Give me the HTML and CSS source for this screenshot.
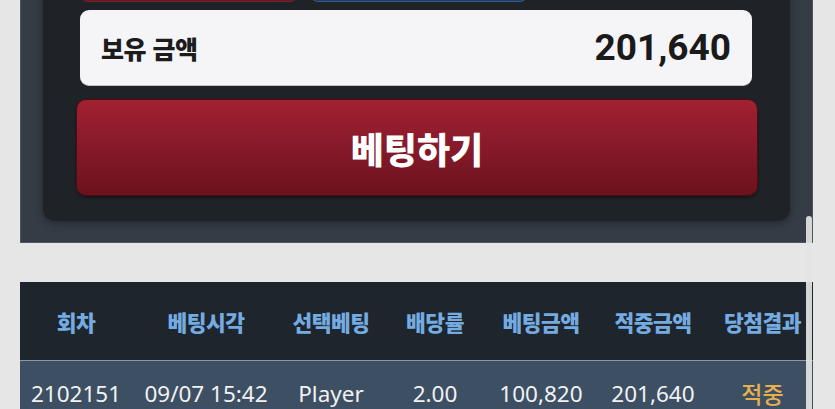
FILE: index.html
```html
<!DOCTYPE html>
<html lang="ko">
<head>
<meta charset="utf-8">
<link rel="stylesheet" href="styles.css">
</head>
<body>
<div class="page">
  <section class="bet-panel">
    <div class="bet-inner">
      <div class="pick-row">
        <div class="pick pick-red"></div>
        <div class="pick pick-blue"></div>
      </div>
      <div class="balance">
        <span class="balance-label">보유 금액</span>
        <span class="balance-value">201,640</span>
      </div>
      <button class="bet-btn">베팅하기</button>
    </div>
  </section>

  <table class="history">
    <colgroup>
      <col class="c1"><col class="c2"><col class="c3"><col class="c4"><col class="c5"><col class="c6"><col class="c7">
    </colgroup>
    <thead>
      <tr>
        <th>회차</th><th>베팅시각</th><th>선택베팅</th><th>배당률</th><th>베팅금액</th><th>적중금액</th><th>당첨결과</th>
      </tr>
    </thead>
    <tbody>
      <tr>
        <td>2102151</td><td>09/07 15:42</td><td>Player</td><td>2.00</td><td>100,820</td><td>201,640</td><td class="win">적중</td>
      </tr>
    </tbody>
  </table>
</div>
<div class="scrollbar"></div>
</body>
</html>
```
FILE: styles.css
```css
html, body {
  margin: 0;
  padding: 0;
  height: 100%;
  overflow: hidden;
}
body {
  background: #e6e6e6;
  font-family: "Noto Sans", "Noto Sans CJK KR", sans-serif;
}
.page {
  padding: 0 22px 0 20px;
}
.bet-panel {
  background: #353c45;
  border: 1px solid #4d5661;
  border-top: none;
  padding: 0 22px 21px 22px;
}
.bet-inner {
  background: #1f2328;
  border-radius: 0 0 12px 12px;
  box-shadow: 0 2px 8px rgba(0, 0, 0, 0.35);
  margin-top: -40px;
  padding: 0 32px 25px 33px;
}
.pick-row {
  display: flex;
  gap: 12px;
  height: 42px;
  padding: 0 4px;
  margin-bottom: 8px;
}
.pick {
  width: 216px;
  border-radius: 0 0 8px 8px;
}
.pick-red {
  background: #5e1a1f;
  border: 1px solid #7b2328;
}
.pick-blue {
  background: #213b5f;
  border: 1px solid #34598a;
}
.balance {
  margin: 0 6px 0 4px;
  height: 76px;
  background: #f5f5f7;
  border-radius: 9px;
  border-bottom: 1px solid #b9c3d3;
  box-sizing: border-box;
  display: flex;
  align-items: center;
  justify-content: space-between;
  padding: 0 21px;
}
.balance-label {
  font-family: "Noto Sans CJK KR", sans-serif;
  font-weight: 900;
  font-size: 25px;
  color: #1c1c1c;
  letter-spacing: -0.5px;
}
.balance-value {
  font-family: Roboto, "Noto Sans", sans-serif;
  font-weight: 700;
  font-size: 37px;
  color: #1a1a1a;
}
.bet-btn {
  display: block;
  width: 100%;
  margin-top: 13px;
  height: 97px;
  border: 1px solid #4a0d14;
  border-radius: 10px;
  background: linear-gradient(to bottom, #a2212f 0%, #86192a 50%, #6c121c 100%);
  color: #ffffff;
  font-family: "Noto Sans CJK KR", sans-serif;
  font-weight: 900;
  font-size: 36px;
  padding: 0;
  box-shadow: 0 2px 3px rgba(0, 0, 0, 0.4);
}
.history {
  width: 793px;
  margin-top: 39px;
  border-collapse: collapse;
  table-layout: fixed;
}
.c1 { width: 112px; }
.c2 { width: 148px; }
.c3 { width: 102px; }
.c4 { width: 106px; }
.c5 { width: 106px; }
.c6 { width: 118px; }
.c7 { width: 101px; }
.history th {
  background: #1e252d;
  height: 78px;
  padding: 0;
  color: #74abe0;
  font-family: "Noto Sans CJK KR", sans-serif;
  font-weight: 900;
  font-size: 21.5px;
  letter-spacing: -0.5px;
  text-align: center;
  white-space: nowrap;
  border-bottom: 1px solid #8c9aa8;
}
.history td {
  background: #3d4f63;
  height: 64px;
  padding: 0;
  color: #f2f2f2;
  font-family: "Noto Sans", "Noto Sans CJK KR", sans-serif;
  font-size: 22.5px;
  text-align: center;
  white-space: nowrap;
  vertical-align: middle;
}
.history td.win {
  color: #e8af4f;
  font-family: "Noto Sans CJK KR", sans-serif;
  font-weight: 500;
  font-size: 23px;
}
.scrollbar {
  position: fixed;
  left: 806px;
  top: 216px;
  width: 6px;
  bottom: 0;
  background: rgba(228, 228, 228, 0.92);
  border-radius: 3px 3px 0 0;
}
```
